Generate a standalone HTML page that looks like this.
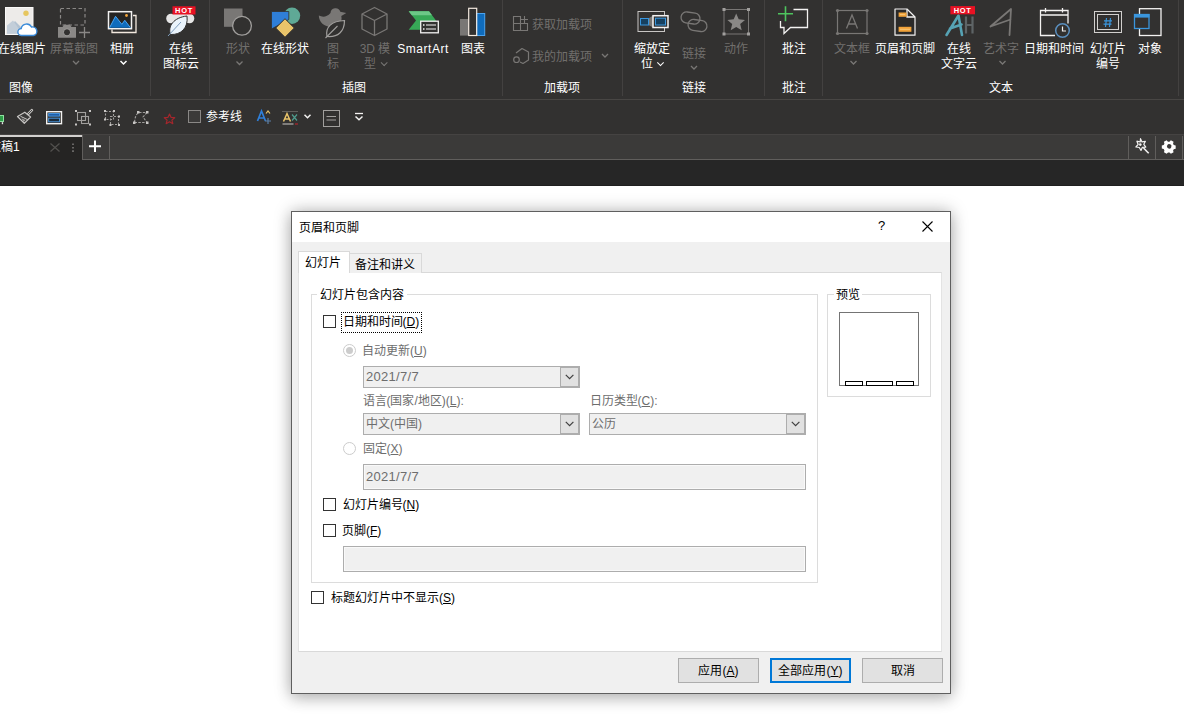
<!DOCTYPE html>
<html lang="zh-CN">
<head>
<meta charset="utf-8">
<title>页眉和页脚</title>
<style>
*{box-sizing:border-box;margin:0;padding:0}
html,body{width:1184px;height:723px;overflow:hidden;background:#fff}
body{font-family:"Liberation Sans",sans-serif;font-size:12px;color:#000;position:relative}
.abs{position:absolute}
/* ---------- top app chrome ---------- */
#ribbon{position:absolute;left:0;top:0;width:1184px;height:100px;background:#323130;border-bottom:1px solid #484644}
#qat{position:absolute;left:0;top:100px;width:1184px;height:34px;background:#323130}
#tabbar{position:absolute;left:0;top:134px;width:1184px;height:26px;background:#3b3a39;border-top:1px solid #454342;border-bottom:1px solid #605e5c}
#strip{position:absolute;left:0;top:160px;width:1184px;height:26px;background:#262626;border-bottom:1px solid #1f1f1f}
.rl{position:absolute;color:#fff;font-size:12px;line-height:15px;text-align:center;white-space:nowrap;transform:translateX(-50%)}
.rl.d{color:#716f6d}
.cv{display:inline-block;width:5px;height:5px;border-right:1.300px solid #797775;border-bottom:1.300px solid #797775;transform:rotate(45deg) translate(-2px,-2px);margin-left:2px}
.cv.w{border-color:#fff;border-width:1.500px}
.gl{position:absolute;top:81px;color:#fff;font-size:12px;line-height:15px;white-space:nowrap;transform:translateX(-50%)}
.gs{position:absolute;top:0;width:1px;height:96px;background:#434140}
.ic{position:absolute}
/* ---------- dialog ---------- */
#dlg{position:absolute;left:291px;top:211px;width:660px;height:483px;background:#f0f0f0;border:1px solid #5f5f5f;box-shadow:0 0 16px rgba(0,0,0,.28),0 6px 14px rgba(0,0,0,.13)}
#dlg .title{position:absolute;left:0;top:0;width:658px;height:30px;background:#fff}
#dlg .t{position:absolute;white-space:nowrap;line-height:16px;font-size:12px}
.g{color:#6d6d6d}
u{text-decoration:underline;text-underline-offset:1px}
.cb{position:absolute;width:13px;height:13px;border:1px solid #333;background:#fff}
.rd{position:absolute;width:13px;height:13px;border:1px solid #cccccc;border-radius:50%;background:#fff}
.fld{position:absolute;background:#f0f0f0;border:1px solid #adadad}
.fld.tx{box-shadow:inset 0 0 0 1px #f9f9f9}
.dd{position:absolute;top:0;right:0;width:19px;height:100%;background:#e1e1e1;border:1px solid #adadad}
.btn{position:absolute;top:446px;width:81px;height:25px;background:#e1e1e1;border:1px solid #adadad;text-align:center;line-height:24.500px;font-size:12px}
.fs{position:absolute;border:1px solid #dcdcdc}
</style>
</head>
<body>
<div id="ribbon">
  <!-- group separators -->
  <div class="gs" style="left:150px"></div><div class="gs" style="left:209px"></div><div class="gs" style="left:502px"></div>
  <div class="gs" style="left:622px"></div><div class="gs" style="left:764px"></div><div class="gs" style="left:822px"></div><div class="gs" style="left:1178px"></div>

  <!-- labels -->
  <div class="rl" style="left:22px;top:42px">在线图片</div>
  <div class="rl d" style="left:74px;top:42px">屏幕截图</div>
  <div class="rl" style="left:122px;top:42px">相册</div>
  <div class="rl" style="left:181px;top:42px">在线<br>图标云</div>
  <div class="rl d" style="left:238px;top:42px">形状</div>
  <div class="rl" style="left:285px;top:42px">在线形状</div>
  <div class="rl d" style="left:333px;top:42px">图<br>标</div>
  <div class="rl d" style="left:375px;top:42px">3D 模<br>型 <span class="cv"></span></div>
  <div class="rl" style="left:423px;top:42px;letter-spacing:.55px">SmartArt</div>
  <div class="rl" style="left:473px;top:42px">图表</div>
  <div class="rl d" style="left:562px;top:18px">获取加载项</div>
  <div class="rl d" style="left:562px;top:50px">我的加载项</div>
  <div class="rl" style="left:652px;top:42px">缩放定<br>位 <span class="cv w"></span></div>
  <div class="rl d" style="left:694px;top:47px">链接</div>
  <div class="rl d" style="left:736px;top:42px">动作</div>
  <div class="rl" style="left:794px;top:42px">批注</div>
  <div class="rl d" style="left:852px;top:42px">文本框</div>
  <div class="rl" style="left:905px;top:42px">页眉和页脚</div>
  <div class="rl" style="left:959px;top:42px">在线<br>文字云</div>
  <div class="rl d" style="left:1001px;top:42px">艺术字</div>
  <div class="rl" style="left:1054px;top:42px">日期和时间</div>
  <div class="rl" style="left:1108px;top:42px">幻灯片<br>编号</div>
  <div class="rl" style="left:1150px;top:42px">对象</div>

  <div class="gl" style="left:21px">图像</div>
  <div class="gl" style="left:354px">插图</div>
  <div class="gl" style="left:562px">加载项</div>
  <div class="gl" style="left:694px">链接</div>
  <div class="gl" style="left:794px">批注</div>
  <div class="gl" style="left:1001px">文本</div>

  <!-- all ribbon icons in one svg -->
  <svg class="abs" style="left:0;top:0" width="1184" height="100" viewBox="0 0 1184 100" fill="none">
    <!-- chevrons -->
    <g stroke="#797775" stroke-width="1.3">
      <path d="M73 61l3 3 3-3"/><path d="M236.500 61.500l3 3 3-3"/><path d="M602 54l3 3 3-3"/>
      <path d="M691 66l3 3 3-3"/><path d="M850.500 61l3 3 3-3"/><path d="M999.500 61l3 3 3-3"/>
    </g>
    <path d="M120.500 61l3 3 3-3" stroke="#fff" stroke-width="1.5"/>

    <!-- 1 online pictures -->
    <rect x="5.500" y="7.500" width="27.500" height="27" fill="#edebe9" stroke="#faf9f8"/>
    <path d="M7 30L15 21l6 6 2-2 6 6v2.500H7z" fill="#b3c2d1"/>
    <path d="M7 33.500v-8l6-5 9 13z" fill="#c3ced9"/>
    <circle cx="26" cy="13.300" r="2.700" fill="#e6c65f"/>
    <path d="M21.500 35.500a3.500 3.500 0 0 1-.3-7 5.500 5.500 0 0 1 10.300-1.500 4.300 4.300 0 0 1 2 8.500z" fill="#fff" stroke="#3a8ad8" stroke-width="1.400"/>

    <!-- 2 screenshot (disabled) -->
    <rect x="60.500" y="8.500" width="24.500" height="16.500" stroke="#8a8886" stroke-width="1.200" stroke-dasharray="3.500 2.500"/>
    <path d="M58 27h4.500l1.500-2.300h6l1.500 2.300h4.500v10.800H58z" fill="#8a8886"/>
    <circle cx="67" cy="32.300" r="3.600" fill="#323130" stroke="#a19f9d" stroke-width="1"/>
    <path d="M79 32.500h11M84.500 27v11" stroke="#8a8886" stroke-width="1.300"/>

    <!-- 3 album -->
    <path d="M133 15.500h3v17h-24v-3" stroke="#f3e9df" stroke-width="1.300"/>
    <rect x="108.500" y="11.700" width="23" height="17" fill="#252423" stroke="#f3f2f1" stroke-width="1.500"/>
    <path d="M109.500 27.800l6-11.500 6.300 8 3-4 5.700 7.500z" fill="#0f6cbd"/>
    <path d="M109.500 27.800l6-11.500 6.300 8 3-4 5.700 7.500" stroke="#4aa3f0" stroke-width="1"/>
    <circle cx="126.500" cy="15.500" r="1.400" fill="#f2a33a"/>

    <!-- 4 online icon cloud -->
    <circle cx="171" cy="18.500" r="4.800" fill="#e6e6e6"/><circle cx="189.500" cy="18.500" r="4.800" fill="#e6e6e6"/>
    <rect x="171" y="14" width="18" height="9" fill="#e6e6e6"/>
    <path d="M170.500 34.500c-3-8 3-17 16.500-18.500 1.500 12-6 19-16.500 18.500z" fill="#eaf3fb" stroke="#323130" stroke-width="1"/>
    <path d="M168 36l13-14" stroke="#7d9cbc" stroke-width="1"/>
    <rect x="172.500" y="6.300" width="23" height="8.200" fill="#e81123"/>
    <text x="184" y="13.200" text-anchor="middle" font-family="Liberation Sans,sans-serif" font-weight="bold" font-size="7.500" letter-spacing=".7" fill="#fff">HOT</text>

    <!-- 5 shapes (disabled) -->
    <rect x="224" y="8.500" width="18.500" height="18.300" fill="#797775"/>
    <circle cx="242" cy="25.800" r="9.400" fill="#323130" stroke="#a19f9d" stroke-width="1.300"/>

    <!-- 6 online shapes -->
    <circle cx="292" cy="15.800" r="8.200" fill="#5fa996"/>
    <path d="M271.500 11.500h17.300v8l-17.300 9.500z" fill="#2f7fd8" stroke="#323130" stroke-width=".8"/>
    <path d="M285 18.700l9.300 9.300-9.300 9.300-9.300-9.300z" fill="#e9c46a" stroke="#323130" stroke-width="1"/>

    <!-- 7 icons (disabled) -->
    <path d="M330.500 13a5 5 0 0 1 9.800-1.200l6 1.200-5 3c1.500 6-3 11-10 11-7 0-12.500-5-12.500-11.500 4 2 8 1.500 11.700-2.500z" fill="#797775"/>
    <path d="M327 36.500c-2-9 4-15.500 17.500-16 0 11-6.500 17-17.500 16z" fill="#323130" stroke="#a19f9d" stroke-width="1.200"/>
    <path d="M325.500 38l12-12" stroke="#a19f9d" stroke-width="1.100"/>

    <!-- 8 3D model (disabled) -->
    <path d="M374.500 7.500l12.500 6.500v15l-12.500 6.500L362 29V14zM362 14l12.500 6.500L387 14M374.500 20.500v15" stroke="#797775" stroke-width="1.300" stroke-linejoin="round"/>

    <!-- 9 SmartArt -->
    <path d="M408.700 11.200h20.300l7 9.300-7 9.200h-20.300l7.300-9.200z" fill="#37a957"/>
    <path d="M408.700 11.200h20.300l3 4h-20.200z" fill="#6cc887"/>
    <rect x="420.700" y="21.200" width="17.600" height="11.600" fill="#323130" stroke="#f3f2f1" stroke-width="1.300"/>
    <path d="M426 25h10M426 29h10" stroke="#f3f2f1" stroke-width="1.100"/>
    <path d="M423 25h1.500M423 29h1.500" stroke="#f3f2f1" stroke-width="1.300"/>

    <!-- 10 chart -->
    <rect x="460" y="19" width="9" height="16.600" fill="#797775"/>
    <rect x="476.500" y="13.500" width="8.200" height="22" fill="#0f6cbd" stroke="#4aa3f0" stroke-width="1"/>
    <rect x="468.700" y="8.300" width="8" height="27.200" stroke="#f3e9df" stroke-width="1.200"/>

    <!-- add-ins -->
    <path d="M513.500 16.500h7v14h-7zM513.500 23.500h14v7h-7M524.500 16v7M521 19.500h7" stroke="#797775" stroke-width="1.100"/>
    <path d="M516 53l6-4.500 6.500 3.500v8l-5.500 3.500-3-1.500" stroke="#797775" stroke-width="1.200" stroke-linejoin="round"/>
    <circle cx="516.500" cy="59.700" r="2.800" stroke="#797775" stroke-width="1.200"/>

    <!-- zoom -->
    <rect x="638" y="11.500" width="26.500" height="20" stroke="#c8c6c4" stroke-width="1"/>
    <path d="M648.500 18.500l4.500-3v12l-4.500-2.500z" fill="#797775"/>
    <rect x="640.500" y="18.500" width="8" height="6.500" fill="#17405f" stroke="#3a96dd" stroke-width="1"/>
    <rect x="653" y="15.700" width="15" height="11.800" fill="#323130" stroke="#f3f2f1" stroke-width="1.500"/>
    <rect x="655.500" y="18.200" width="10" height="6.800" fill="#17405f" stroke="#3a96dd" stroke-width="1"/>

    <!-- link (disabled) -->
    <rect x="681" y="12.500" width="19" height="11" rx="5.500" transform="rotate(8 690.500 18)" stroke="#797775" stroke-width="1.300"/>
    <rect x="688" y="20" width="19" height="11" rx="5.500" transform="rotate(8 697.500 25.500)" stroke="#797775" stroke-width="1.300"/>

    <!-- action (disabled) -->
    <rect x="724" y="9.500" width="24.500" height="24.500" stroke="#797775" stroke-width="1"/>
    <g fill="#a19f9d"><rect x="722.500" y="8" width="3" height="3"/><rect x="747" y="8" width="3" height="3"/><rect x="722.500" y="32.500" width="3" height="3"/><rect x="747" y="32.500" width="3" height="3"/></g>
    <path d="M736.200 13.500l2.500 5.800 6.300.6-4.800 4.200 1.500 6.200-5.500-3.300-5.500 3.300 1.500-6.200-4.800-4.200 6.300-.6z" fill="#8a8886"/>

    <!-- comment -->
    <path d="M793.500 9.500h14v18h-17l-6.500 6v-6h-3.500V21" stroke="#f3f2f1" stroke-width="1.300"/>
    <path d="M778 13.700h15M785.500 6.200v15" stroke="#4ec45e" stroke-width="1.600"/>

    <!-- text box (disabled) -->
    <rect x="837.500" y="10.500" width="29.500" height="23" stroke="#797775" stroke-width="1.200"/>
    <g fill="#797775"><circle cx="837.500" cy="10.500" r="1.600"/><circle cx="867" cy="10.500" r="1.600"/><circle cx="837.500" cy="33.500" r="1.600"/><circle cx="867" cy="33.500" r="1.600"/></g>
    <path d="M846.500 28.500l5.500-13.500 5.500 13.500M848.500 24h7" stroke="#797775" stroke-width="1.300"/>

    <!-- header & footer -->
    <path d="M895 9h12l8 8v18.200h-20z" fill="#2b2a29" stroke="#f3f2f1" stroke-width="1.200" stroke-linejoin="round"/>
    <path d="M907 9v8h8" stroke="#f3f2f1" stroke-width="1.300"/>
    <rect x="898.600" y="12.500" width="8" height="4.300" fill="#f2a33a"/>
    <rect x="898.600" y="26.800" width="12.800" height="5" fill="#f2a33a"/>
    <path d="M900 14.600h5M900 29.300h10" stroke="#f7c779" stroke-width="1"/>

    <!-- online word cloud -->
    <path d="M966 16.500v17M972.500 16.500v17M966 25h6.500" stroke="#5e6466" stroke-width="2.200"/>
    <path d="M946.500 35l12-19.500 3.500 19.500M950 28.500l11.500-4" stroke="#56a3b4" stroke-width="2.600" stroke-linecap="round" stroke-linejoin="round"/>
    <rect x="950.400" y="6.100" width="24.600" height="8.200" fill="#e81123"/>
    <text x="962.700" y="13" text-anchor="middle" font-family="Liberation Sans,sans-serif" font-weight="bold" font-size="7.500" letter-spacing=".7" fill="#fff">HOT</text>

    <!-- word art (disabled) -->
    <path d="M990.500 26.500L1011 9l-1.500 26M990.500 26.500l20-7" stroke="#797775" stroke-width="1.800" stroke-linecap="round" stroke-linejoin="round"/>

    <!-- date & time -->
    <path d="M1055 35.500h-14.500v-25h27.500v13M1040.500 15h27.500M1045.500 8v4.500M1062.500 8v4.500" stroke="#f3f2f1" stroke-width="1.300"/>
    <circle cx="1062.500" cy="30.500" r="6.800" stroke="#5a8fbf" stroke-width="1.500"/>
    <path d="M1062.500 26.500v4.500h3.500" stroke="#f3f2f1" stroke-width="1.200"/>

    <!-- slide number -->
    <rect x="1094.500" y="11.500" width="27" height="21" stroke="#d2d0ce" stroke-width="1"/>
    <rect x="1097.500" y="14.500" width="21" height="15" stroke="#d2d0ce" stroke-width="1"/>
    <path d="M1106.500 18l-1 9M1110.500 18l-1 9M1104 20.800h8M1103.500 24.200h8" stroke="#3a96dd" stroke-width="1.200"/>

    <!-- object -->
    <rect x="1139.500" y="8.700" width="21.500" height="26.800" stroke="#f3f2f1" stroke-width="1.300"/>
    <rect x="1134.500" y="14.500" width="14.500" height="14" fill="#323130" stroke="#3a96dd" stroke-width="1.300"/>
    <rect x="1134" y="14" width="15.500" height="3.600" fill="#3a96dd"/>
  </svg>
</div>
<div id="qat">
  <svg class="abs" style="left:0;top:0" width="400" height="34" viewBox="0 100 400 34" fill="none">
    <!-- green partial -->
    <rect x="-2" y="115.500" width="5.500" height="6" fill="#2f9e49" stroke="#8fe0a0" stroke-width="1"/><rect x="1.800" y="122.200" width="1.300" height="2" fill="#e8e8e8"/>
    <!-- format painter brush -->
    <path d="M28.300 113.800l3.600-3.600" stroke="#c8c6c4" stroke-width="2.600" stroke-linecap="round"/>
    <path d="M28.300 113.800l3.600-3.600" stroke="#323130" stroke-width=".9" stroke-linecap="round"/>
    <path d="M24.800 112.200l5.800 4.800-6.300 6.400-6.800-6.900z" fill="#3b3a39" stroke="#c8c6c4" stroke-width="1.200" stroke-linejoin="round"/>
    <path d="M20.500 116.300l7.200 3.400" stroke="#c8c6c4" stroke-width="1"/>
    <path d="M21.500 118.200l4 1.800-2 2.300z" fill="#a19f9d"/>
    <!-- window icon -->
    <rect x="46.700" y="111.700" width="14.800" height="12" stroke="#f3f2f1" stroke-width="1.400"/>
    <rect x="48.700" y="113.500" width="10.800" height="2.600" fill="#1f5fa8" stroke="#4a9be8" stroke-width=".9"/>
    <rect x="48.700" y="118.200" width="10.800" height="3.600" fill="#1b2b3a" stroke="#4a9be8" stroke-width=".9"/>
    <!-- group -->
    <g stroke="#a19f9d" stroke-width="1.100"><rect x="77.500" y="112.500" width="8" height="8"/><rect x="81.500" y="116.500" width="7" height="7"/></g>
    <g fill="#c8c6c4"><rect x="75" y="110" width="2" height="2"/><rect x="89" y="110" width="2" height="2"/><rect x="75" y="123.500" width="2" height="2"/><rect x="89" y="123.500" width="2" height="2"/></g>
    <!-- ungroup -->
    <g stroke="#a19f9d" stroke-width="1.100" stroke-dasharray="2 1.500"><rect x="105.500" y="111.500" width="8" height="8"/><rect x="110.500" y="116.500" width="8" height="8"/></g>
    <g fill="#c8c6c4"><rect x="104" y="110" width="2" height="2"/><rect x="113" y="110" width="2" height="2"/><rect x="104" y="118.500" width="2" height="2"/><rect x="118" y="115.500" width="2" height="2"/><rect x="109.500" y="124" width="2" height="2"/><rect x="118" y="124" width="2" height="2"/></g>
    <!-- edit points -->
    <path d="M134.500 122.500c.5-5 1.500-8.500 4.500-10M139 112.500h8M147 112.500l-4 4.500 4 5.500M134.500 122.500h12.500" stroke="#a19f9d" stroke-width="1.100" stroke-dasharray="2.500 1.300"/>
    <g fill="#c8c6c4"><rect x="137" y="111" width="2.500" height="2.500"/><rect x="146" y="111" width="2.500" height="2.500"/><rect x="133" y="121.500" width="2.500" height="2.500"/><rect x="146" y="121.500" width="2.500" height="2.500"/></g>
    <!-- red star -->
    <path d="M169.500 114l1.500 3.300 3.700.4-2.800 2.400.9 3.600-3.300-1.900-3.300 1.900.9-3.600-2.800-2.400 3.700-.4z" stroke="#a4262c" stroke-width="1.200" stroke-linejoin="round"/>
    <!-- checkbox -->
    <rect x="188.500" y="110.500" width="12" height="12" fill="#3b3a39" stroke="#8a8886"/>
    <!-- A^ -->
    <path d="M257.500 121l4-10 4 10M259 118h5" stroke="#2f7fd8" stroke-width="1.700"/>
    <path d="M266 113.500l2-2.500 2 2.500" stroke="#e9c46a" stroke-width="1.200"/>
    <path d="M268 118v6M265 121h6" stroke="#5a7fa6" stroke-width="1.200"/>
    <!-- Ax -->
    <path d="M282 111.500h16" stroke="#605e5c" stroke-width="1"/>
    <path d="M283.500 121.500l3.500-8 3.500 8M284.800 119h4.400" stroke="#e9c46a" stroke-width="1.500"/>
    <path d="M292 114.500l5 6M297 114.500l-5 6" stroke="#4f9c8d" stroke-width="1.200"/>
    <path d="M282.500 124h11" stroke="#a19f9d" stroke-width="1.400"/><path d="M295 124h3" stroke="#b3262c" stroke-width="1.200"/>
    <path d="M304.500 114.800l3 3 3-3" stroke="#f3f2f1" stroke-width="1.500"/>
    <!-- box lines -->
    <rect x="323.500" y="110.500" width="16" height="16" stroke="#a19f9d" stroke-width="1"/>
    <path d="M326.500 116.500h9.500M326.500 120h9.500" stroke="#a19f9d" stroke-width="1.100"/>
    <!-- customise -->
    <path d="M355 113.500h8" stroke="#f3f2f1" stroke-width="1.300"/><path d="M355.500 116.500l3.500 3.200 3.500-3.200" stroke="#f3f2f1" stroke-width="1.500"/>
  </svg>
  <div class="abs" style="left:206px;top:10px;color:#fff;font-size:12px;line-height:15px;white-space:nowrap">参考线</div>
</div>
<div id="tabbar">
  <div class="abs" style="left:0;top:0;width:82px;height:26px;background:#252423;border-top:2px solid #d2d0ce"></div>
  <div class="abs" style="left:-11px;top:5px;color:#fff;font-size:12px;line-height:15px;white-space:nowrap">文稿1</div>
  <div class="abs" style="left:82px;top:0;width:1px;height:25px;background:#605e5c"></div>
  <div class="abs" style="left:109px;top:1px;width:1px;height:24px;background:#605e5c"></div>
  <div class="abs" style="left:1128px;top:1px;width:1px;height:24px;background:#605e5c"></div>
  <div class="abs" style="left:1155px;top:1px;width:1px;height:24px;background:#605e5c"></div>
  <div class="abs" style="left:1182px;top:1px;width:1px;height:24px;background:#605e5c"></div>
  <svg class="abs" style="left:0;top:-1px" width="1184" height="26" viewBox="0 134 1184 26" fill="none">
    <path d="M50.500 143.500l9 8M59.500 143.500l-9 8" stroke="#53514f" stroke-width="1.200"/>
    <path d="M73 143.500v1.600M73 146.900v1.600M73 150.300v1.600" stroke="#797775" stroke-width="1.600"/>
    <path d="M89 146.200h12M95 140.500v11.500" stroke="#fff" stroke-width="2"/>
    <!-- wand -->
    <path d="M1140.500 138.700l1.500 3.200 3.400-.6-1.600 3 2 2.800-3.400.2-1.400 3.200-1.700-3-3.400-.5 2.300-2.600-1.300-3.200 3.300.8z" stroke="#f3f2f1" stroke-width="1.200" stroke-linejoin="round"/>
    <circle cx="1140.300" cy="144.600" r="1.300" fill="#f3f2f1"/>
    <path d="M1143.500 148l5.200 5.200" stroke="#f3f2f1" stroke-width="1.600"/>
    <!-- gear -->
    <g transform="translate(1169.200 146.300) rotate(30) scale(.86)">
      <path d="M-1.800-7h3.600l.6 2.200 1.500.9 2.200-.6 1.800 3.100-1.600 1.600v1.700l1.600 1.600-1.800 3.100-2.200-.6-1.500.9-.6 2.200h-3.600l-.6-2.200-1.500-.9-2.200.6-1.800-3.100 1.600-1.600v-1.700l-1.600-1.600 1.800-3.100 2.200.6 1.500-.9z" fill="#fff"/>
      <circle r="2.600" fill="#3b3a39"/>
    </g>
  </svg>
</div>
<div id="strip"></div>

<div id="dlg">
  <div class="title"></div>
  <div class="t" style="left:7px;top:8px">页眉和页脚</div>
  <div class="t" style="left:586px;top:6px;font-size:13px">?</div>
  <svg class="abs" style="left:630px;top:9px" width="11" height="11" viewBox="0 0 11 11"><path d="M.5.5l10 10M10.500.5l-10 10" stroke="#000" stroke-width="1.1" fill="none"/></svg>

  <!-- tab control -->
  <div class="abs" style="left:6px;top:60px;width:644px;height:380px;background:#fff;border:1px solid #d9d9d9;border-left-color:#e3e3e3;border-right-color:#e3e3e3"></div>
  <div class="abs" style="left:57px;top:41px;width:73px;height:20px;background:#f0f0f0;border:1px solid #d9d9d9;border-bottom:none"></div>
  <div class="abs" style="left:6px;top:39px;width:52px;height:22px;background:#fff;border:1px solid #d9d9d9;border-bottom:none"></div>
  <div class="t" style="left:12.500px;top:42.500px">幻灯片</div>
  <div class="t" style="left:62.500px;top:45px">备注和讲义</div>

  <!-- group: slide content -->
  <div class="fs" style="left:19px;top:82px;width:507px;height:289px"></div>
  <div class="t" style="left:25px;top:75px;background:#fff;padding:0 3px 0 2.500px">幻灯片包含内容</div>

  <div class="cb" style="left:31px;top:103px"></div>
  <div class="abs" style="left:49px;top:100px;width:81px;height:21px;border:1px dotted #000"></div>
  <div class="t" style="left:50.500px;top:102px">日期和时间(<u>D</u>)</div>

  <div class="rd" style="left:51px;top:132px"><div class="abs" style="left:2px;top:2px;width:7px;height:7px;border-radius:50%;background:#cccccc"></div></div>
  <div class="t g" style="left:70px;top:131px">自动更新(<u>U</u>)</div>
  <div class="fld" style="left:71px;top:154px;width:217px;height:22px"><div class="dd"><svg class="abs" style="left:3.500px;top:5.700px" width="10" height="6" viewBox="0 0 10 6"><path d="M.8.800l3.800 3.800 3.800-3.800" stroke="#404040" stroke-width="1.200" fill="none"/></svg></div></div>
  <div class="t g" style="left:74px;top:157px;font-size:13px;letter-spacing:.3px">2021/7/7</div>

  <div class="t g" style="left:70.500px;top:181px">语言(国家/地区)(<u>L</u>):</div>
  <div class="t g" style="left:297.500px;top:181px">日历类型(<u>C</u>):</div>
  <div class="fld" style="left:71px;top:201px;width:217px;height:22px"><div class="dd"><svg class="abs" style="left:3.500px;top:5.700px" width="10" height="6" viewBox="0 0 10 6"><path d="M.8.800l3.800 3.800 3.800-3.800" stroke="#404040" stroke-width="1.200" fill="none"/></svg></div></div>
  <div class="t g" style="left:74px;top:204px">中文(中国)</div>
  <div class="fld" style="left:297px;top:201px;width:217px;height:22px"><div class="dd"><svg class="abs" style="left:3.500px;top:5.700px" width="10" height="6" viewBox="0 0 10 6"><path d="M.8.800l3.800 3.800 3.800-3.800" stroke="#404040" stroke-width="1.200" fill="none"/></svg></div></div>
  <div class="t g" style="left:300px;top:204px">公历</div>

  <div class="rd" style="left:51px;top:230px"></div>
  <div class="t g" style="left:70.500px;top:229px">固定(<u>X</u>)</div>
  <div class="fld tx" style="left:71px;top:252px;width:443px;height:26px"></div>
  <div class="t g" style="left:74px;top:257px;font-size:13px;letter-spacing:.3px">2021/7/7</div>

  <div class="cb" style="left:31px;top:286px"></div>
  <div class="t" style="left:50.500px;top:285px">幻灯片编号(<u>N</u>)</div>
  <div class="cb" style="left:31px;top:312px"></div>
  <div class="t" style="left:50px;top:311px">页脚(<u>F</u>)</div>
  <div class="fld tx" style="left:51px;top:334px;width:463px;height:26px"></div>

  <div class="cb" style="left:19px;top:379px"></div>
  <div class="t" style="left:39px;top:378px">标题幻灯片中不显示(<u>S</u>)</div>

  <!-- preview -->
  <div class="fs" style="left:535px;top:82px;width:104px;height:103px"></div>
  <div class="t" style="left:542px;top:75px;background:#fff;padding:0 2px">预览</div>
  <div class="abs" style="left:547px;top:100px;width:80px;height:74px;border:1px solid #747474;background:#fff"></div>
  <div class="abs" style="left:553px;top:169px;width:18px;height:5px;border:1px solid #000;background:#fff"></div>
  <div class="abs" style="left:574px;top:169px;width:27px;height:5px;border:1px solid #000;background:#fff"></div>
  <div class="abs" style="left:604px;top:169px;width:18px;height:5px;border:1px solid #000;background:#fff"></div>

  <!-- buttons -->
  <div class="btn" style="left:386px">应用(<u>A</u>)</div>
  <div class="btn" style="left:478px;border:2px solid #0078d7;line-height:22.500px">全部应用(<u>Y</u>)</div>
  <div class="btn" style="left:570px">取消</div>
</div>
</body>
</html>
